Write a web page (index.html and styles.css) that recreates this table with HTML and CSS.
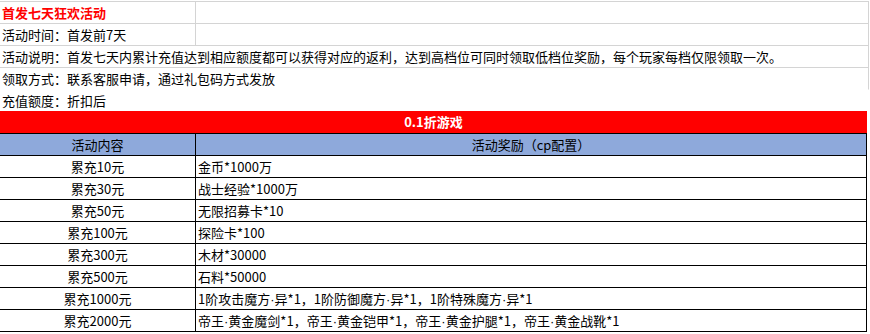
FILE: index.html
```html
<!DOCTYPE html>
<html lang="zh-CN">
<head>
<meta charset="utf-8">
<title>首发七天狂欢活动</title>
<link rel="stylesheet" href="styles.css">
</head>
<body>
<div class="sheet">
  <div class="info">
    <div class="row split">
      <div class="cell a title">首发七天狂欢活动</div>
      <div class="cell b"></div>
    </div>
    <div class="row split">
      <div class="cell a">活动时间：首发前7天</div>
      <div class="cell b"></div>
    </div>
    <div class="row full">
      <div class="cell">活动说明：首发七天内累计充值达到相应额度都可以获得对应的返利，达到高档位可同时领取低档位奖励，每个玩家每档仅限领取一次。</div>
    </div>
    <div class="row full open">
      <div class="cell">领取方式：联系客服申请，通过礼包码方式发放</div>
    </div>
    <div class="row last">
      <div class="cell">充值额度：折扣后</div>
    </div>
  </div>
  <div class="banner">0.1折游戏</div>
  <div class="tbl">
    <div class="tr head"><div class="td k">活动内容</div><div class="td v c">活动奖励（cp配置）</div></div>
    <div class="tr"><div class="td k">累充10元</div><div class="td v">金币*1000万</div></div>
    <div class="tr"><div class="td k">累充30元</div><div class="td v">战士经验*1000万</div></div>
    <div class="tr"><div class="td k">累充50元</div><div class="td v">无限招募卡*10</div></div>
    <div class="tr"><div class="td k">累充100元</div><div class="td v">探险卡*100</div></div>
    <div class="tr"><div class="td k">累充300元</div><div class="td v">木材*30000</div></div>
    <div class="tr"><div class="td k">累充500元</div><div class="td v">石料*50000</div></div>
    <div class="tr"><div class="td k">累充1000元</div><div class="td v">1阶攻击魔方<span class="dot">·</span>异*1，1阶防御魔方<span class="dot">·</span>异*1，1阶特殊魔方<span class="dot">·</span>异*1</div></div>
    <div class="tr"><div class="td k">累充2000元</div><div class="td v">帝王<span class="dot">·</span>黄金魔剑*1，帝王<span class="dot">·</span>黄金铠甲*1，帝王<span class="dot">·</span>黄金护腿*1，帝王<span class="dot">·</span>黄金战靴*1</div></div>
  </div>
</div>
</body>
</html>
```

FILE: styles.css
```css
html, body {
  margin: 0;
  padding: 0;
  background: #ffffff;
}

body {
  font-family: "Noto Sans CJK SC", "Microsoft YaHei", sans-serif;
  font-size: 13px;
  color: #000000;
}

.sheet {
  width: 870px;
  padding-top: 1px;
  overflow: hidden;
}

.info {
  width: 869px;
  border-top: 1px solid #d4d4d4;
}

.row {
  height: 22px;
  box-sizing: border-box;
  border-bottom: 1px solid #d4d4d4;
}

.row.split {
  display: grid;
  grid-template-columns: 196px 673px;
}

.row.full {
  border-right: 1px solid #d4d4d4;
}

.row.open {
  border-bottom-color: transparent;
}

.row.last {
  height: 21px;
  border-bottom: none;
}

.cell {
  box-sizing: border-box;
  height: 21px;
  padding-left: 2px;
  line-height: 21px;
  white-space: nowrap;
}

.cell.a,
.cell.b {
  border-right: 1px solid #d4d4d4;
}

.title {
  color: #ff0000;
  font-weight: bold;
}

.banner {
  width: 867px;
  height: 22px;
  line-height: 22px;
  background: #ff0000;
  color: #ffffff;
  font-weight: bold;
  text-align: center;
}

.tbl {
  width: 867px;
  box-sizing: border-box;
  border-top: 1px solid #000000;
  border-right: 1px solid #000000;
}

.tr {
  display: grid;
  grid-template-columns: 196px 1fr;
  height: 22px;
  box-sizing: border-box;
  border-bottom: 1px solid #000000;
}

.tr.head {
  background: #8ea9db;
}

.td {
  line-height: 21px;
  white-space: nowrap;
}

.td.k {
  border-right: 1px solid #000000;
  text-align: center;
}

.td.v {
  padding-left: 2px;
}

.td.v.c {
  padding-left: 0;
  text-align: center;
}

.dot {
  font-family: "Liberation Sans", sans-serif;
}
```
